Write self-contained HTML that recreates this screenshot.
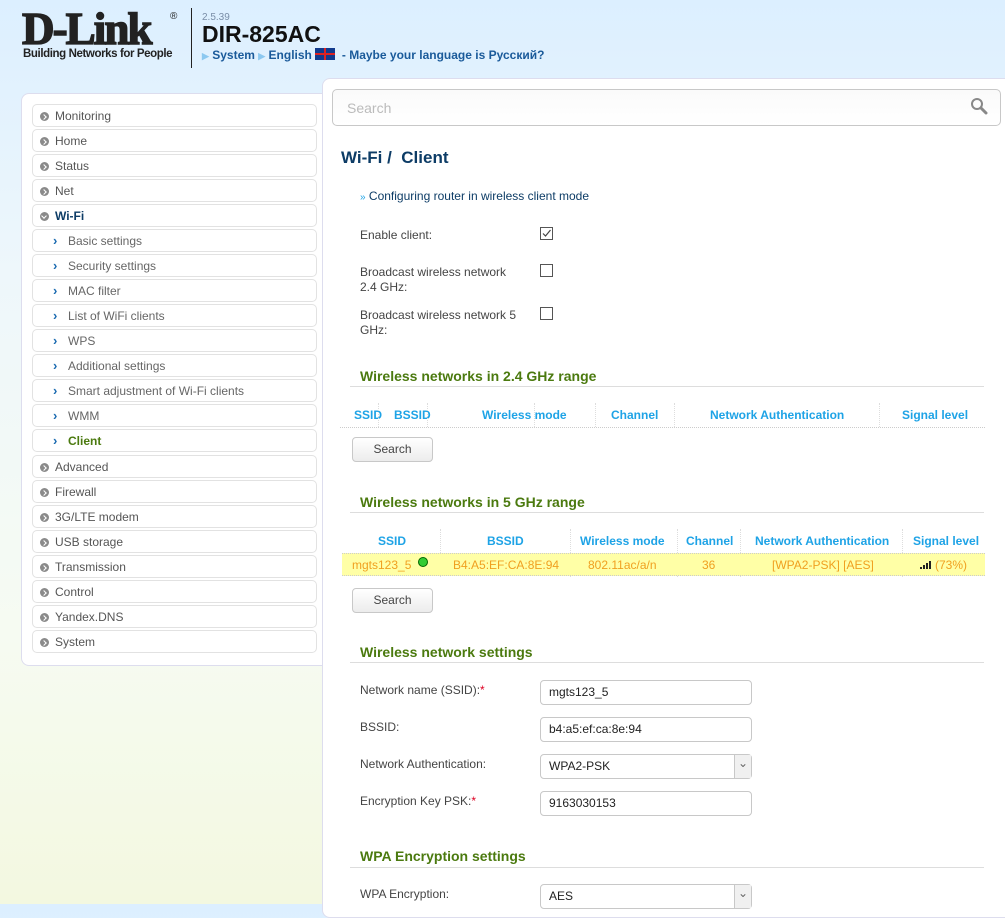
<!DOCTYPE html>
<html><head><meta charset="utf-8"><style>
*{box-sizing:border-box;margin:0;padding:0}
body{width:1005px;height:904px;overflow:hidden;position:relative;font-family:"Liberation Sans",Arial,sans-serif;font-size:12px;color:#444;background:linear-gradient(180deg,#dcefff 0%,#eef7fb 30%,#f6fbf2 70%,#f3f8e0 100%)}
.a{position:absolute;white-space:nowrap}
.lp{position:absolute;left:21px;top:93px;width:310px;height:573px;background:#fff;border:1px solid #dde;border-radius:8px}
.mi{position:absolute;left:32px;width:285px;height:23px;border:1px solid #e2e2e2;border-radius:5px;background:#fff;line-height:23px;padding-left:22px;color:#555;font-size:12px}
.mi .ic{position:absolute;left:7px;top:7px;width:9px;height:9px;border-radius:50%;background:#8a8a8a}
.mi .ic:after{content:"";position:absolute;left:2px;top:3px;width:3px;height:3px;border-right:1.3px solid #fff;border-top:1.3px solid #fff;transform:rotate(45deg)}
.mi.sub{padding-left:35px;color:#666}
.mi.sub:before{content:"›";position:absolute;left:20px;top:-1px;color:#1a6ab0;font-weight:bold;font-size:13px}
.main{position:absolute;left:322px;top:78px;width:700px;height:840px;background:#fff;border:1px solid #dde;border-radius:8px}
.lab{font-size:12px;color:#444}
.cb{position:absolute;width:13px;height:13px;border:1px solid #555;background:#fff}
.h2{font-weight:bold;font-size:14px;color:#4b7a0f}
.hl{position:absolute;left:350px;width:634px;height:1px;background:#ddd}
.th{color:#1ea3e6;font-weight:bold;font-size:12px;text-align:center}
.btn{position:absolute;left:352px;width:81px;height:25px;border:1px solid #c8c8c8;border-radius:4px;background:linear-gradient(#fff,#ececec);text-align:center;line-height:23px;color:#444;font-size:12px}
.inp{position:absolute;left:540px;width:212px;height:25px;border:1px solid #c8c8c8;border-radius:4px;background:#fff;padding-left:8px;line-height:23px;color:#222;font-size:12px}
.sel:after{content:"⌄";position:absolute;right:0;top:0;width:16px;height:23px;border-left:1px solid #c8c8c8;background:#f0f0f0;text-align:center;line-height:16px;color:#666}
.vs{position:absolute;width:1px;border-left:1px dotted #ddd}
</style></head><body>
<div class="a" style="left:22px;top:6px;font-family:'Liberation Serif',serif;font-weight:bold;font-size:46px;color:#222;letter-spacing:-2px;line-height:46px;transform:scaleX(0.98);transform-origin:left;-webkit-text-stroke:1.5px #222">D-Link</div>
<div class="a" style="left:170px;top:11px;font-size:10px;color:#222">®</div>
<div class="a" style="left:23px;top:48px;font-weight:bold;font-size:11.5px;color:#222;letter-spacing:-0.4px">Building Networks for People</div>
<div class="a" style="left:191px;top:8px;width:1px;height:60px;background:#222"></div>
<div class="a" style="left:202px;top:12px;font-size:10px;color:#7a8ea8">2.5.39</div>
<div class="a" style="left:202px;top:21px;font-weight:bold;font-size:23px;color:#111">DIR-825AC</div>
<div class="a" style="left:202px;top:48px;font-size:12px;color:#1a5a9a;font-weight:bold"><span style="color:#8cc8f0;font-size:9px">▶</span> System <span style="color:#8cc8f0;font-size:9px">▶</span> English <span style="display:inline-block;width:20px;height:12px;background:#123a8c;position:relative;vertical-align:-1px;overflow:hidden"><span style="position:absolute;left:0;top:5px;width:20px;height:2px;background:#d22"></span><span style="position:absolute;left:9px;top:0;width:2px;height:12px;background:#d22"></span></span> &nbsp;- Maybe your language is Русский?</div>

<div class="lp"></div>
<div class="mi" style="top:104px"><span class="ic"></span>Monitoring</div>
<div class="mi" style="top:129px"><span class="ic"></span>Home</div>
<div class="mi" style="top:154px"><span class="ic"></span>Status</div>
<div class="mi" style="top:179px"><span class="ic"></span>Net</div>
<div class="mi" style="top:204px;color:#0d3c66;font-weight:bold"><span class="ic" style="transform:rotate(90deg)"></span>Wi-Fi</div>
<div class="mi sub" style="top:229px">Basic settings</div>
<div class="mi sub" style="top:254px">Security settings</div>
<div class="mi sub" style="top:279px">MAC filter</div>
<div class="mi sub" style="top:304px">List of WiFi clients</div>
<div class="mi sub" style="top:329px">WPS</div>
<div class="mi sub" style="top:354px">Additional settings</div>
<div class="mi sub" style="top:379px">Smart adjustment of Wi-Fi clients</div>
<div class="mi sub" style="top:404px">WMM</div>
<div class="mi sub" style="top:429px;color:#4b7a0f;font-weight:bold">Client</div>
<div class="mi" style="top:455px"><span class="ic"></span>Advanced</div>
<div class="mi" style="top:480px"><span class="ic"></span>Firewall</div>
<div class="mi" style="top:505px"><span class="ic"></span>3G/LTE modem</div>
<div class="mi" style="top:530px"><span class="ic"></span>USB storage</div>
<div class="mi" style="top:555px"><span class="ic"></span>Transmission</div>
<div class="mi" style="top:580px"><span class="ic"></span>Control</div>
<div class="mi" style="top:605px"><span class="ic"></span>Yandex.DNS</div>
<div class="mi" style="top:630px"><span class="ic"></span>System</div>

<div class="main"></div>
<div class="a" style="left:332px;top:89px;width:669px;height:37px;border:1px solid #c8c8c8;border-radius:5px;background:linear-gradient(#fafafa,#fff);padding-left:14px;line-height:36px;color:#bbb;font-size:14px">Search</div>
<svg class="a" style="left:970px;top:97px" width="18" height="18"><circle cx="7" cy="7" r="5" fill="none" stroke="#888" stroke-width="2"/><path d="M11 11 L16 16" stroke="#888" stroke-width="3" stroke-linecap="round"/></svg>

<div class="a" style="left:341px;top:148px;font-weight:bold;font-size:17px;color:#0d3c66">Wi-Fi / &nbsp;Client</div>
<div class="a" style="left:360px;top:189px;color:#0d3c66"><span style="color:#1ea3e6;font-size:10px">»</span> Configuring router in wireless client mode</div>
<div class="a lab" style="left:360px;top:228px">Enable client:</div>
<div class="cb" style="left:540px;top:227px"><svg width="11" height="11" style="position:absolute;left:0;top:0"><path d="M2 5.5 L4.5 8 L9.5 2" fill="none" stroke="#444" stroke-width="1.2"/></svg></div>
<div class="a lab" style="left:360px;top:265px;line-height:15px">Broadcast wireless network<br>2.4 GHz:</div>
<div class="cb" style="left:540px;top:264px"></div>
<div class="a lab" style="left:360px;top:308px;line-height:15px">Broadcast wireless network 5<br>GHz:</div>
<div class="cb" style="left:540px;top:307px"></div>

<div class="a h2" style="left:360px;top:368px">Wireless networks in 2.4 GHz range</div>
<div class="hl" style="top:386px"></div>
<div class="a th" style="left:354px;top:408px">SSID</div>
<div class="a th" style="left:394px;top:408px">BSSID</div>
<div class="a th" style="left:482px;top:408px">Wireless mode</div>
<div class="a th" style="left:611px;top:408px">Channel</div>
<div class="a th" style="left:710px;top:408px">Network Authentication</div>
<div class="a th" style="left:902px;top:408px">Signal level</div>
<div class="vs" style="left:378px;top:403px;height:24px"></div>
<div class="vs" style="left:427px;top:403px;height:24px"></div>
<div class="vs" style="left:534px;top:403px;height:24px"></div>
<div class="vs" style="left:595px;top:403px;height:24px"></div>
<div class="vs" style="left:674px;top:403px;height:24px"></div>
<div class="vs" style="left:879px;top:403px;height:24px"></div>
<div class="a" style="left:340px;top:427px;width:645px;border-top:1px dotted #ccc"></div>
<div class="btn" style="top:437px">Search</div>

<div class="a h2" style="left:360px;top:494px">Wireless networks in 5 GHz range</div>
<div class="hl" style="top:512px"></div>
<div class="a th" style="left:378px;top:534px">SSID</div>
<div class="a th" style="left:487px;top:534px">BSSID</div>
<div class="a th" style="left:580px;top:534px">Wireless mode</div>
<div class="a th" style="left:686px;top:534px">Channel</div>
<div class="a th" style="left:755px;top:534px">Network Authentication</div>
<div class="a th" style="left:913px;top:534px">Signal level</div>
<div class="vs" style="left:440px;top:529px;height:48px"></div>
<div class="vs" style="left:570px;top:529px;height:48px"></div>
<div class="vs" style="left:677px;top:529px;height:48px"></div>
<div class="vs" style="left:740px;top:529px;height:48px"></div>
<div class="vs" style="left:902px;top:529px;height:48px"></div>
<div class="a" style="left:342px;top:553px;width:643px;height:23px;background:#ffffa6;border-bottom:1px dotted #ccc"></div>
<div class="a" style="left:342px;top:553px;width:643px;border-top:1px dotted #ccc"></div>
<div class="a" style="left:352px;top:558px;color:#f0a020">mgts123_5</div>
<div class="a" style="left:418px;top:557px;width:10px;height:10px;border-radius:50%;background:#3c3;border:1px solid #060"></div>
<div class="a" style="left:453px;top:558px;color:#f0a020">B4:A5:EF:CA:8E:94</div>
<div class="a" style="left:588px;top:558px;color:#f0a020">802.11ac/a/n</div>
<div class="a" style="left:702px;top:558px;color:#f0a020">36</div>
<div class="a" style="left:772px;top:558px;color:#f0a020">[WPA2-PSK] [AES]</div>
<svg class="a" style="left:920px;top:561px" width="12" height="8"><rect x="0" y="6" width="2" height="2" fill="#222"/><rect x="3" y="4" width="2" height="4" fill="#222"/><rect x="6" y="2" width="2" height="6" fill="#222"/><rect x="9" y="0" width="2" height="8" fill="#222"/></svg>
<div class="a" style="left:935px;top:558px;color:#f0a020">(73%)</div>
<div class="btn" style="top:588px">Search</div>

<div class="a h2" style="left:360px;top:644px">Wireless network settings</div>
<div class="hl" style="top:662px"></div>
<div class="a lab" style="left:360px;top:683px">Network name (SSID):<span style="color:#d02">*</span></div>
<div class="inp" style="top:680px">mgts123_5</div>
<div class="a lab" style="left:360px;top:720px">BSSID:</div>
<div class="inp" style="top:717px">b4:a5:ef:ca:8e:94</div>
<div class="a lab" style="left:360px;top:757px">Network Authentication:</div>
<div class="inp sel" style="top:754px">WPA2-PSK</div>
<div class="a lab" style="left:360px;top:794px">Encryption Key PSK:<span style="color:#d02">*</span></div>
<div class="inp" style="top:791px">9163030153</div>

<div class="a h2" style="left:360px;top:848px">WPA Encryption settings</div>
<div class="hl" style="top:867px"></div>
<div class="a lab" style="left:360px;top:887px">WPA Encryption:</div>
<div class="inp sel" style="top:884px">AES</div>
</body></html>
